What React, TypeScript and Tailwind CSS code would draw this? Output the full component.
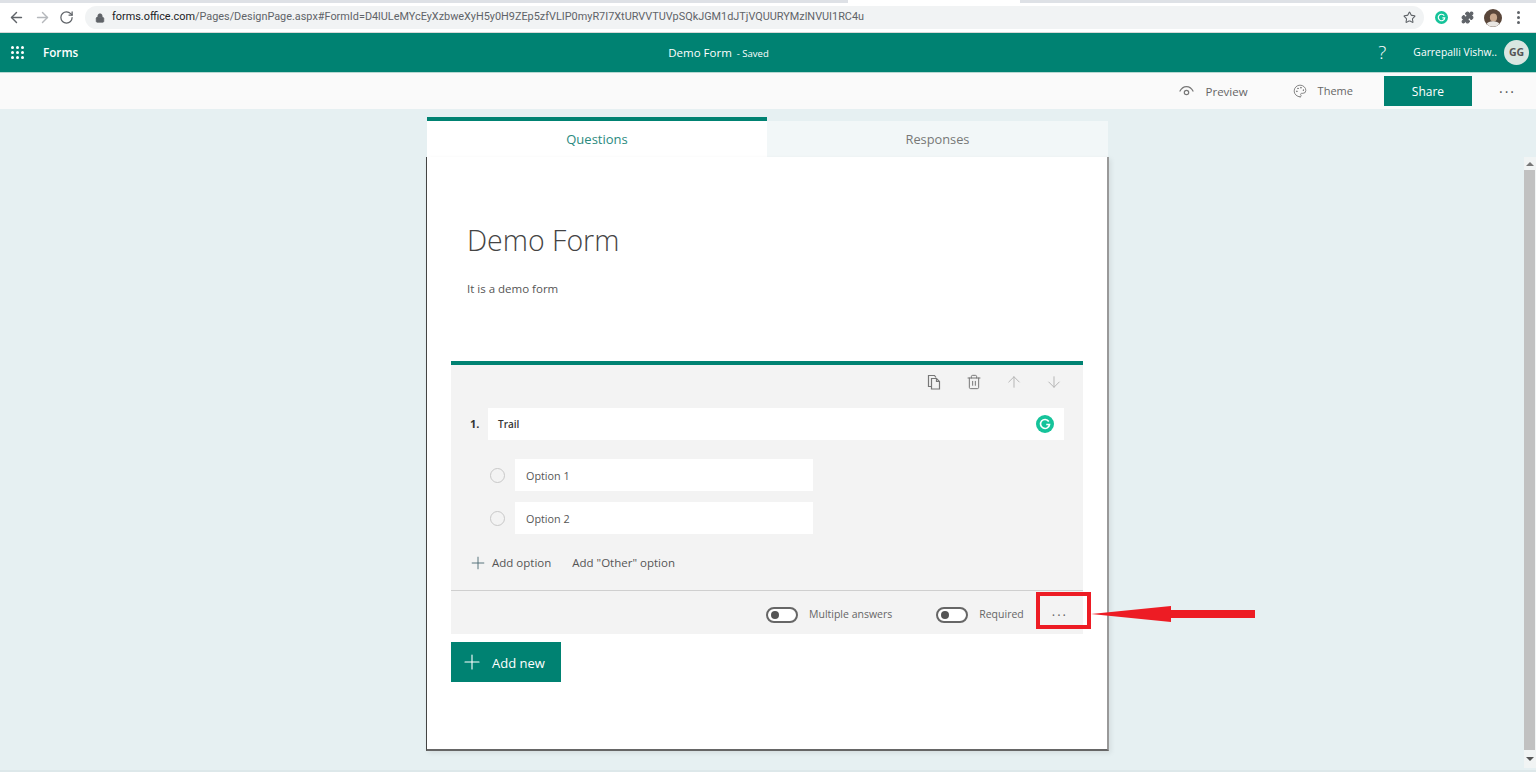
import React from "react";
import { ArrowLeft, ArrowRight, RotateCw, Lock, Star, Puzzle, Palette, Trash2, ArrowUp, ArrowDown, Plus } from "lucide-react";

const font = "font-['Open_Sans','Noto_Sans',sans-serif]";

function GrammarlyIcon({ size }: { size: number }) {
  return (
    <svg width={size} height={size} viewBox="0 0 20 20" className="shrink-0">
      <circle cx="10" cy="10" r="10" fill="#15c39a" />
      <path d="M14.2 7.2A5 5 0 1 0 15 10.6h-3.6" fill="none" stroke="#fff" strokeWidth="1.8" />
    </svg>
  );
}

function Toggle() {
  return (
    <div className="w-[32px] h-[16px] rounded-full border-2 border-[#666] bg-white flex items-center pl-[3px] shrink-0">
      <div className="w-[8px] h-[8px] rounded-full bg-[#555]" />
    </div>
  );
}

function Option({ label }: { label: string }) {
  return (
    <div className="flex items-center pl-[39px]">
      <div className="w-[15px] h-[15px] rounded-full border border-[#c8c8c8] shrink-0" />
      <div className="ml-[10px] w-[298px] h-[32px] pt-[2px] bg-white flex items-center pl-[11px] text-[10.8px] text-[#555]">{label}</div>
    </div>
  );
}

export default function App() {
  return (
    <div className={`${font} w-[1536px] h-[772px] overflow-hidden flex flex-col bg-[#e6f0f2]`}>
      {/* Browser chrome */}
      <div className="h-[3px] bg-[#dee1e6] flex shrink-0">
        <div className="w-[848px]" />
        <div className="w-[172px] bg-white" />
      </div>
      <div className="h-[30px] bg-white flex items-center pl-[8px] shrink-0 border-b border-[#d8d8d8]">
        <ArrowLeft size={17} color="#5f6368" strokeWidth={2} />
        <ArrowRight size={17} color="#b5b8bc" strokeWidth={2} className="ml-[9px]" />
        <RotateCw size={15} color="#5f6368" strokeWidth={2} className="ml-[8px]" />
        <div className="ml-[11px] w-[1339px] h-[23px] bg-[#f1f3f4] rounded-full flex items-center pl-[10px] pr-[8px] shrink-0">
          <Lock size={10} color="#5f6368" fill="#5f6368" />
          <div className="ml-[7px] text-[10.88px] text-[#5f6368] whitespace-nowrap font-['Roboto','Open_Sans',sans-serif] flex-1">
            <span className="text-[#202124]">forms.office.com</span>/Pages/DesignPage.aspx#FormId=D4lULeMYcEyXzbweXyH5y0H9ZEp5zfVLIP0myR7I7XtURVVTUVpSQkJGM1dJTjVQUURYMzlNVUI1RC4u
          </div>
          <Star size={13} color="#5f6368" strokeWidth={2} />
        </div>
        <div className="ml-[11px]"><GrammarlyIcon size={13} /></div>
        <Puzzle size={13} color="#5f6368" fill="#5f6368" className="ml-[13px]" />
        <svg width="18" height="18" viewBox="0 0 18 18" className="ml-[10px] shrink-0">
          <circle cx="9" cy="9" r="9" fill="#5a463a" />
          <ellipse cx="9.5" cy="8.5" rx="3.6" ry="4" fill="#c9a88e" />
          <path d="M2.5 15a7 4.5 0 0 1 13 0A9 9 0 0 1 2.5 15z" fill="#e9e6e2" />
        </svg>
        <div className="ml-[15px] flex flex-col gap-[2px]">
          <div className="w-[3px] h-[3px] rounded-full bg-[#5f6368]" />
          <div className="w-[3px] h-[3px] rounded-full bg-[#5f6368]" />
          <div className="w-[3px] h-[3px] rounded-full bg-[#5f6368]" />
        </div>
      </div>

      {/* Forms header */}
      <div className="h-[40px] bg-[#008272] border-b border-[#b8d8d2] flex items-center text-white shrink-0">
        <div className="ml-[11px] grid grid-cols-3 gap-[2px]">
          {Array.from({ length: 9 }).map((_, i) => (
            <div key={i} className="w-[3px] h-[3px] bg-white rounded-full" />
          ))}
        </div>
        <div className="ml-[19px] text-[11.7px] font-semibold">Forms</div>
        <div className="ml-[590px] text-[11.5px] flex items-baseline">
          Demo Form<span className="text-[9.5px] ml-[5px]">- Saved</span>
        </div>
        <div className="ml-auto flex items-center pr-[7px]">
          <span className="text-[19px] font-light leading-none mr-[27px]">?</span>
          <span className="text-[10.35px] whitespace-nowrap">Garrepalli Vishw..</span>
          <div className="ml-[7px] w-[25px] h-[25px] rounded-full bg-[#d9e6e1] text-[#555] text-[10.5px] font-bold flex items-center justify-center">GG</div>
        </div>
      </div>

      {/* Command bar */}
      <div className="h-[36px] bg-[#fafafa] flex items-center justify-end shrink-0 text-[11.5px] text-[#666]">
        <svg width="15" height="12" viewBox="0 0 15 12" fill="none" stroke="#777" strokeWidth="1.2">
          <path d="M0.7 6.5C4 0 11 0 14.3 6.5" />
          <circle cx="7.5" cy="7.5" r="2.2" />
        </svg>
        <span className="ml-[12px] pt-px">Preview</span>
        <Palette size={14} color="#777" strokeWidth={1.5} className="ml-[45px]" />
        <span className="ml-[11px] pt-px text-[11px]">Theme</span>
        <div className="ml-[31px] w-[88px] h-[30px] bg-[#008272] text-white text-[12px] pt-px flex items-center justify-center">Share</div>
        <div className="ml-[27px] mr-[20px] text-[#555] text-[14px] tracking-[2px] leading-none pb-[6px]">...</div>
      </div>

      {/* Body */}
      <div className="flex-1 flex min-h-0 relative">
        <div className="flex-1 flex flex-col pl-[427px] pt-[8px]">
          <div className="w-[681px] flex items-end h-[40px] shrink-0">
            <div className="w-[340px] h-[40px] pt-[2px] bg-white border-t-4 border-[#008272] flex items-center justify-center text-[13px] text-[#2b8a7e]">Questions</div>
            <div className="w-[341px] h-[36px] pt-[2px] bg-[#f2f7f8] flex items-center justify-center text-[12.8px] text-[#777]">Responses</div>
          </div>
          <div className="-ml-px w-[683px] h-[594px] bg-white border-l border-l-[#444] border-r-2 border-r-[#999] border-b-2 border-b-[#666] shadow-[2px_2px_5px_rgba(0,0,0,0.08)] flex flex-col pl-[24px] shrink-0">
            <div className="ml-[16px] mt-[65px] text-[28.5px] leading-[36px] font-light text-[#444]">Demo Form</div>
            <div className="ml-[16px] mt-[22px] text-[11.5px] leading-[18px] text-[#555]">It is a demo form</div>

            <div className="mt-[63px] w-[632px] border-t-4 border-[#008272] bg-[#f3f3f3] flex flex-col shrink-0">
              <div className="h-[43px] pb-[10px] flex items-center justify-end gap-[22px] pr-[20px]">
                <svg width="18" height="18" viewBox="0 0 18 18" fill="none" stroke="#777" strokeWidth="1.2">
                  <path d="M6 13.5H3.5V2.5h6l1.5 2" />
                  <path d="M6.5 5.5h5l3 3v7.5h-8z" />
                  <path d="M11.5 5.5v3h3" />
                </svg>
                <Trash2 size={16} color="#777" strokeWidth={1.5} className="mx-px" />
                <ArrowUp size={18} color="#b4b4b4" strokeWidth={1.3} />
                <ArrowDown size={18} color="#b4b4b4" strokeWidth={1.3} />
              </div>
              <div className="flex items-center pl-[19px]">
                <span className="w-[18px] text-[11px] font-bold text-[#333]">1.</span>
                <div className="w-[576px] h-[32px] bg-white flex items-center justify-between pl-[10px] pr-[10px] text-[10px] font-semibold text-[#333]">
                  Trail
                  <GrammarlyIcon size={18} />
                </div>
              </div>
              <div className="mt-[19px] flex flex-col gap-[11px]">
                <Option label="Option 1" />
                <Option label="Option 2" />
              </div>
              <div className="h-[33px] mt-[13px] mb-[10px] pb-[2px] flex items-center pl-[17px] text-[11.5px] text-[#555]">
                <Plus size={20} color="#4a6a72" strokeWidth={1.1} />
                <span className="ml-[4px]">Add option</span>
                <span className="ml-[21px]">Add "Other" option</span>
              </div>
              <div className="h-[44px] pt-[4px] border-t border-[#cfcfcf] flex items-center justify-end text-[10.5px] text-[#666] relative">
                <Toggle />
                <span className="ml-[11px]">Multiple answers</span>
                <div className="ml-[44px]"><Toggle /></div>
                <span className="ml-[11px]">Required</span>
                <span className="ml-[28px] mr-[15px] text-[13px] tracking-[2px] leading-none pb-[6px] text-[#666]">...</span>
                <div className="absolute left-[585px] top-[1px] w-[55px] h-[37px] border-4 border-[#ed1c24]" />
              </div>
            </div>

            <div className="mt-[8px] w-[110px] h-[40px] bg-[#008272] text-white flex items-center pl-[9px] text-[13px]">
              <Plus size={24} color="#fff" strokeWidth={1.1} />
              <span className="ml-[8px] pt-[3px]">Add new</span>
            </div>
          </div>
        </div>

        {/* Scrollbar */}
        <div className="absolute right-0 top-[48px] bottom-[2px] w-[12px] bg-[#f1f4f4] flex flex-col items-start">
          <div className="h-[13px] w-[11px] flex items-center justify-center">
            <div className="w-0 h-0 border-x-[4px] border-x-transparent border-b-[4px] border-b-[#777]" />
          </div>
          <div className="w-[11px] flex-1 bg-[#c1c1c1]" />
          <div className="h-[18px] w-[11px] flex items-center justify-center">
            <div className="w-0 h-0 border-x-[4px] border-x-transparent border-t-[4px] border-t-[#555]" />
          </div>
        </div>

        {/* Annotation arrow */}
        <svg className="absolute left-[1091px] top-[490px]" width="165" height="30" viewBox="0 0 165 30">
          <polygon points="0,15 80,7 80,11 164,11 164,19 80,19 80,23" fill="#ed1c24" />
        </svg>
      </div>
      <div className="h-[2px] bg-[#dde8ea] shrink-0" />
    </div>
  );
}
